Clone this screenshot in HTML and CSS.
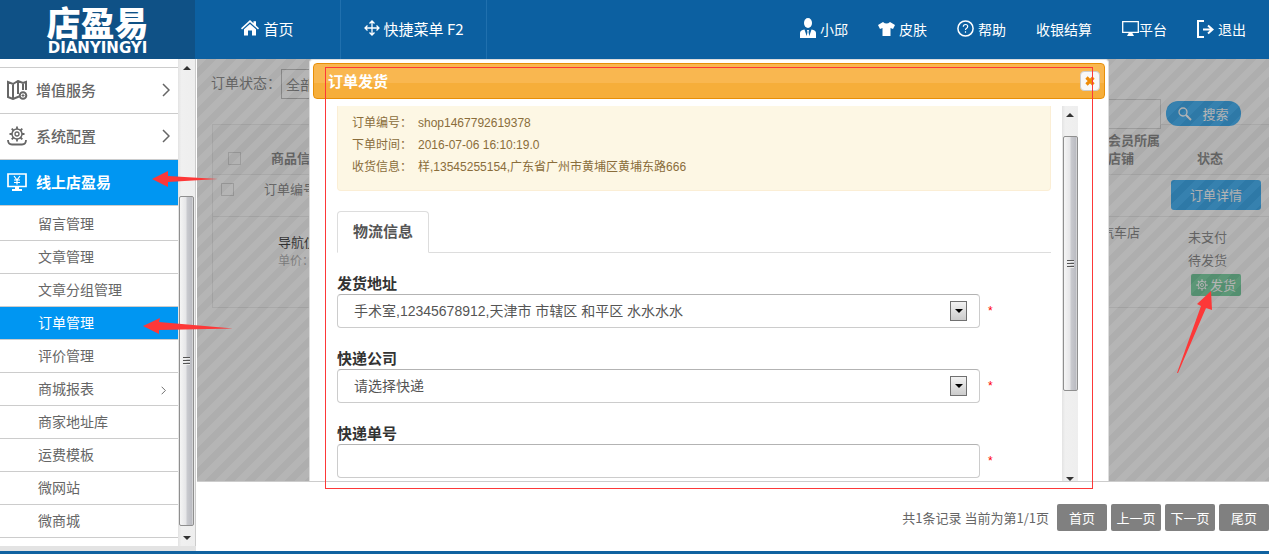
FILE: index.html
```html
<!DOCTYPE html>
<html lang="zh-CN">
<head>
<meta charset="utf-8">
<title>店盈易 - 订单管理</title>
<link rel="stylesheet" href="styles.css">
</head>
<body>
<svg class="defs" width="0" height="0" aria-hidden="true">
  <symbol id="gear" viewBox="0 0 24 24">
    <circle cx="12" cy="12" r="7.5" fill="none" stroke="currentColor" stroke-width="2"/>
    <circle cx="12" cy="12" r="3" fill="none" stroke="currentColor" stroke-width="2"/>
    <path d="M12 0.500v4M12 19.500v4M0.500 12h4M19.500 12h4M3.900 3.900l2.800 2.800M17.300 17.300l2.800 2.800M3.900 20.100l2.800-2.800M17.300 6.700l2.800-2.800" stroke="currentColor" stroke-width="2.500" fill="none"/>
  </symbol>
  <symbol id="chevron" viewBox="0 0 8 14">
    <path d="M1 1l6 6-6 6" fill="none" stroke="currentColor" stroke-width="1.500"/>
  </symbol>
</svg>

<header class="topbar">
  <a class="logo" href="#">
    <span class="logo-cn">店盈易</span>
    <span class="logo-en">DIANYINGYI</span>
  </a>
  <nav class="nav-main">
    <a href="#">
      <svg width="18" height="16" viewBox="0 0 18 16" fill="#fff"><path d="M9 0l3.500 3.200V1.200H15v4.300L18 8.300l-1 1.100L9 2.300 1 9.400 0 8.300z"/><path d="M9 4l6 5.300V15.500h-4v-5H7v5H3V9.300z"/></svg>
      首页
    </a>
    <a href="#">
      <svg width="16" height="16" viewBox="0 0 16 16" fill="none" stroke="#fff" stroke-width="1.300"><path d="M8 1v14M1 8h14M5.500 3.500L8 1l2.500 2.500M5.500 12.500L8 15l2.500-2.500M3.500 5.500L1 8l2.500 2.500M12.500 5.500L15 8l-2.500 2.500"/></svg>
      快捷菜单 F2
    </a>
  </nav>
  <nav class="nav-user">
    <a class="user" href="#">
      <svg width="16" height="20" viewBox="0 0 16 20" fill="#fff"><ellipse cx="8" cy="5" rx="4" ry="5"/><path d="M4.500 11.500L7 19H0v-4q0-3 4.500-3.500zM11.500 11.500L9 19h7v-4q0-3-4.500-3.500zM7 12h2l-.5 2 .8 4L8 20l-1.300-2 .8-4z"/><path d="M0 18h16v2H0z"/></svg>
      小邱
    </a>
    <a href="#">
      <svg width="17" height="15" viewBox="0 0 17 15" fill="#fff"><path d="M5 1q3.500 3 7 0l5 3-2 4-2.500-1v8h-8V7L2 8 0 4z"/></svg>
      皮肤
    </a>
    <a href="#">
      <svg width="17" height="17" viewBox="0 0 17 17" fill="none" stroke="#fff"><circle cx="8.500" cy="8.500" r="7.600" stroke-width="1.500"/><path d="M6.300 6.800q0-2.300 2.200-2.300t2.200 2q0 1-1.100 1.700t-1.100 1.800M8.500 11.300v1.500" stroke-width="1.200"/></svg>
      帮助
    </a>
    <a href="#">收银结算</a>
    <a class="platform" href="#">
      <svg width="17" height="15" viewBox="0 0 17 15"><path d="M.7.700h15.600v10.600H.7z" fill="none" stroke="#fff" stroke-width="1.300"/><path d="M7 11.500h3l2 3.500H5z" fill="#fff"/></svg>平台
    </a>
    <a href="#">
      <svg width="17" height="18" viewBox="0 0 17 18" fill="none" stroke="#fff" stroke-width="2"><path d="M7 1H1v16h6M6 9.500h9M11 5.500l4.500 4-4.500 4"/></svg>
      退出
    </a>
  </nav>
</header>

<div class="workspace">
  <aside class="sidebar">
    <div class="sidebar-body">
      <nav class="menu">
        <a class="group" href="#">
          <svg width="22" height="20" viewBox="0 0 22 20" fill="none" stroke="#666" stroke-width="2"><path d="M12 16.500l-6 2.500-5-2V2l5 2 5-3 5 2 3-1v8M6 4v15M11 1v13M16 3v7"/><circle cx="16" cy="15.500" r="3.300"/><path d="M16 14v3M14.500 15.500h3" stroke-width="1"/></svg>
          <span>增值服务</span>
          <svg class="chev" width="8" height="14"><use href="#chevron"/></svg>
        </a>
        <a class="group" href="#">
          <svg width="22" height="20" viewBox="0 0 22 20" fill="none" stroke="#666"><circle cx="10" cy="8" r="5" stroke-width="1.500"/><circle cx="10" cy="8" r="2" stroke-width="1.300"/><path d="M10 .5V3M10 13v2.500M2.500 8H5M15 8h2.500M4.700 2.700l1.800 1.800M13.500 11.500l1.800 1.800M4.700 13.300l1.800-1.800M13.500 4.500l1.800-1.800" stroke-width="1.800"/><path d="M1 14q0 4.500 4 4.500h10q4 0 4-4.500" stroke-width="1.800"/></svg>
          <span>系统配置</span>
          <svg class="chev" width="8" height="14"><use href="#chevron"/></svg>
        </a>
        <a class="group active" href="#">
          <svg width="22" height="20" viewBox="0 0 22 20" fill="none" stroke="#fff"><path d="M1 2h18v12.500H1z" stroke-width="1.700"/><path d="M7 4l3 4 3-4M7 8h6M7 10.500h6M10 8v4.500" stroke-width="1.200"/><path d="M8 14.500h4V17h3v2H5v-2h3z" fill="#fff" stroke="none"/></svg>
          <span>线上店盈易</span>
        </a>
        <ul class="submenu">
          <li><a href="#">留言管理</a></li>
          <li><a href="#">文章管理</a></li>
          <li><a href="#">文章分组管理</a></li>
          <li><a class="active" href="#">订单管理</a></li>
          <li><a href="#">评价管理</a></li>
          <li><a href="#">商城报表<svg class="chev" width="5" height="9"><use href="#chevron"/></svg></a></li>
          <li><a href="#">商家地址库</a></li>
          <li><a href="#">运费模板</a></li>
          <li><a href="#">微网站</a></li>
          <li><a href="#">微商城</a></li>
        </ul>
      </nav>
      <div class="scrollbar side-scroll" aria-hidden="true">
        <i class="arrow up"></i>
        <div class="thumb"><i class="grip"></i></div>
        <i class="arrow down"></i>
      </div>
    </div>
  </aside>

  <main class="main">
    <section class="stage">
      <div class="page">
        <form class="filters">
          <label for="status">订单状态：</label>
          <select id="status"><option>全部</option></select>
          <input class="keyword" type="text" aria-label="关键字">
          <button class="search" type="button">
            <svg width="14" height="14" viewBox="0 0 14 14" fill="none" stroke="#fff"><circle cx="5" cy="5" r="4" stroke-width="1.300"/><path d="M8 8l5 5" stroke-width="2"/></svg>
            搜索
          </button>
        </form>
        <div class="orders-wrap">
          <table class="orders">
            <colgroup><col><col class="c-store"><col class="c-status"></colgroup>
            <thead>
              <tr>
                <th><span class="line head"><input type="checkbox" aria-label="全选">商品信息</span></th>
                <th>会员所属店铺</th>
                <th class="state">状态</th>
              </tr>
            </thead>
            <tbody>
              <tr class="r-order">
                <td colspan="2"><span class="line"><input type="checkbox" aria-label="选择订单">订单编号</span></td>
                <td><button class="detail" type="button">订单详情</button></td>
              </tr>
              <tr class="r-item">
                <td><div class="goods"><strong>导航仪</strong><span>单价：</span></div></td>
                <td class="store">汽车店</td>
                <td class="ops">
                  <p>未支付</p>
                  <p>待发货</p>
                  <button class="ship" type="button"><svg width="12" height="12"><use href="#gear"/></svg>发货</button>
                </td>
              </tr>
            </tbody>
          </table>
        </div>
      </div>
      <div class="overlay"></div>

      <div class="dialog" role="dialog" aria-labelledby="dlg-title">
        <div class="dialog-title">
          <h2 id="dlg-title">订单发货</h2>
          <button class="close" type="button" aria-label="关闭">
            <svg width="10" height="10" viewBox="0 0 10 10"><path d="M1.500 1.500l7 7M8.500 1.500l-7 7" stroke="#ef8c08" stroke-width="3.200"/></svg>
          </button>
        </div>
        <div class="dialog-body">
          <div class="dialog-content">
            <dl class="notice">
              <div><dt>订单编号：</dt><dd>shop1467792619378</dd></div>
              <div><dt>下单时间：</dt><dd>2016-07-06 16:10:19.0</dd></div>
              <div><dt>收货信息：</dt><dd>样,13545255154,广东省广州市黄埔区黄埔东路666</dd></div>
            </dl>
            <div class="tabs"><a class="tab" href="#">物流信息</a></div>
            <form class="ship-form">
              <div class="field">
                <label for="addr">发货地址</label>
                <div class="control">
                  <span class="select-box">
                    <select id="addr"><option>手术室,12345678912,天津市 市辖区 和平区 水水水水</option></select>
                    <i class="drop"></i>
                  </span>
                  <em>*</em>
                </div>
              </div>
              <div class="field">
                <label for="company">快递公司</label>
                <div class="control">
                  <span class="select-box">
                    <select id="company"><option>请选择快递</option></select>
                    <i class="drop"></i>
                  </span>
                  <em>*</em>
                </div>
              </div>
              <div class="field">
                <label for="number">快递单号</label>
                <div class="control">
                  <input id="number" type="text">
                  <em>*</em>
                </div>
              </div>
            </form>
          </div>
          <div class="scrollbar dialog-scroll" aria-hidden="true">
            <i class="arrow up"></i>
            <div class="thumb"><i class="grip"></i></div>
            <i class="arrow down"></i>
          </div>
        </div>
      </div>
      <div class="frame"></div>
    </section>

    <footer class="pager">
      <span>共1条记录 当前为第1/1页</span>
      <button type="button">首页</button>
      <button type="button">上一页</button>
      <button type="button">下一页</button>
      <button type="button">尾页</button>
    </footer>
  </main>

  <svg class="mark mark-group" width="66" height="16" viewBox="0 0 66 16"><path d="M0 8L16 0v5l50 3-50 3v5z" fill="#fd3838"/></svg>
  <svg class="mark mark-item" width="90" height="16" viewBox="0 0 90 16"><path d="M0 8L17 0l-1 4 74 6.500L16 12v4z" fill="#fd3838"/></svg>
  <svg class="mark mark-ship" width="36" height="82" viewBox="0 0 36 82"><path d="M34 0L20 13l4 2L0 82h1L29 17l6 2z" fill="#fd3838"/></svg>
</div>
<div class="bottom-line"></div>
</body>
</html>
```

FILE: styles.css
```css
* { box-sizing: border-box; }

body {
  margin: 0;
  min-height: 100vh;
  display: flex;
  flex-direction: column;
  overflow-x: hidden;
  background: #fff;
  color: #666;
  font: 14px/20px "Noto Sans CJK SC", sans-serif;
}

a { color: inherit; text-decoration: none; }
svg { flex: none; }
button, input, select { font: inherit; color: inherit; margin: 0; }
button { border: 0; padding: 0; cursor: pointer; }
.defs { position: absolute; }

/* top bar */
.topbar {
  display: flex;
  height: 59px;
  background: #0c60a1;
  color: #fff;
}
.logo {
  width: 195px;
  background: #0f5186;
  display: flex;
  flex-direction: column;
  align-items: center;
  padding-top: 3px;
  font-weight: 900;
}
.logo-cn { font-size: 34px; line-height: 37px; }
.logo-en { font: bold 15px/16px "DejaVu Sans", sans-serif; }
.nav-main { display: flex; font-size: 15px; }
.nav-main a {
  width: 146px;
  display: flex;
  align-items: center;
  justify-content: center;
  gap: 4px;
  padding-bottom: 2px;
  border-right: 1px solid #2070ae;
}
.nav-main svg { margin-bottom: 2px; }
.nav-user {
  display: flex;
  margin-left: auto;
  padding: 0 23px 2px 0;
  gap: 30px;
}
.nav-user a { display: flex; align-items: center; gap: 4px; }
.nav-user .platform { gap: 0; }
.nav-user .user svg { margin-bottom: 2px; }

/* workspace */
.workspace { flex: 1; display: flex; position: relative; }

.sidebar {
  width: 197px;
  display: flex;
  flex-direction: column;
  padding-bottom: 5px;
  background: #e3e3e3;
  border-right: 1px solid #fff;
}
.sidebar-body {
  flex: 1;
  display: flex;
  background: #fff;
  border-right: 1px solid #ccc;
}
.menu { flex: 1; padding-top: 8px; }
.group {
  display: flex;
  align-items: center;
  gap: 7px;
  height: 46px;
  padding: 0 8px 2px 7px;
  border-top: 1px solid #ccc;
  font-size: 15px;
  font-weight: 500;
}
.group .chev, .submenu .chev { margin-left: auto; }
.group.active { background: #0096f2; color: #fff; font-weight: 700; }
.submenu {
  list-style: none;
  margin: 0;
  padding: 2px 0 0;
  border-top: 1px solid #ccc;
}
.submenu a {
  display: flex;
  align-items: center;
  height: 33px;
  padding: 0 12px 2px 38px;
  border-bottom: 1px solid #ccc;
}
.submenu a.active { background: #0096f2; color: #fff; }
.submenu .chev { margin-top: 4px; }

/* drawn scrollbars */
.scrollbar {
  width: 16px;
  display: flex;
  flex-direction: column;
  align-items: center;
  background: linear-gradient(90deg, #e3e3e3, #f0f0f0 20%, #eee);
}
.arrow { border: 4px solid transparent; }
.arrow.up { border-top: 0; border-bottom: 4px solid #333; margin: 7px 0 0; }
.arrow.down { border-bottom: 0; border-top: 4px solid #333; margin: auto 0 6px; }
.thumb {
  width: 15px;
  display: flex;
  align-items: center;
  justify-content: center;
  border: 1px solid #8f8f8f;
  border-radius: 2px;
  background: linear-gradient(90deg, #f5f5f5, #e6e6e8 45%, #c9cacf 55%, #bbbcc2 90%, #e0e0e0);
}
.grip {
  width: 7px;
  height: 8px;
  background: repeating-linear-gradient(#555 0 1px, #eee 1px 2px, transparent 2px 3px);
}
.side-scroll { width: 17px; }
.side-scroll .thumb { height: 330px; margin-top: 126px; }
.dialog-scroll .thumb { height: 255px; margin-top: 19px; }
.dialog-scroll .arrow.down { margin-bottom: 0; }

/* main area */
.main { flex: 1; min-width: 0; display: flex; flex-direction: column; }
.stage {
  flex: 1;
  position: relative;
  border-bottom: 1px solid #ccc;
}
.page { padding-top: 9px; }
.filters {
  display: grid;
  grid-template-columns: auto 100px 1fr auto;
  padding: 0 28px 0 14px;
  height: 56px;
}
.filters label { line-height: 28px; width: 70px; white-space: nowrap; }
.filters select {
  height: 30px;
  margin-top: 1px;
  padding-left: 4px;
  border: 1px solid #aaa;
  background: #fff;
  appearance: none;
}
.filters .keyword {
  justify-self: end;
  width: 160px;
  height: 30px;
  margin-top: 31px;
  border: 1px solid #ccc;
}
.filters .search {
  display: flex;
  align-items: center;
  justify-content: center;
  gap: 10px;
  width: 75px;
  height: 25px;
  margin: 33px 0 0 5px;
  border-radius: 12px;
  background: #0096f2;
  color: #fff;
  font-size: 13px;
}
.orders-wrap { padding-left: 15px; }
.orders {
  width: 100%;
  table-layout: fixed;
  border-collapse: collapse;
  border: 1px solid #e6e6e6;
  border-right: 0;
  font-size: 13px;
  line-height: 18px;
}
.orders tr { border-bottom: 1px solid #e6e6e6; }
.orders th, .orders td { padding: 0; text-align: left; vertical-align: top; }
.orders thead tr { height: 50px; background: #fafafa; }
.orders thead th { padding-top: 6px; }
.orders thead .state { padding: 24px 0 0 36px; }
.c-store { width: 53px; }
.c-status { width: 108px; }
.line { display: flex; align-items: center; gap: 30px; padding: 5px 0 0 8px; }
.line.head { padding: 18px 0 0 15px; }
.line input {
  appearance: none;
  width: 13px;
  height: 13px;
  border: 1px solid #ccc;
}
.r-order { height: 42px; }
.r-order .detail {
  width: 90px;
  height: 30px;
  margin: 5px 0 0 10px;
  border-radius: 3px;
  background: #0096f2;
  color: #fff;
}
.r-item { height: 91px; }
.goods { display: flex; flex-direction: column; padding: 16px 0 0 65px; }
.goods strong { color: #000; font-weight: 400; }
.goods span { color: #999; font-size: 12px; }
.orders .store { padding: 6px 21px 0 0; direction: rtl; white-space: nowrap; }
.orders .ops { padding: 11px 0 0 27px; }
.ops p { margin: 0 0 5px; }
.ops .ship {
  display: flex;
  align-items: center;
  justify-content: center;
  gap: 2px;
  width: 50px;
  height: 22px;
  margin-left: 3px;
  border-radius: 2px;
  background: #4cc283;
  color: #fff;
}
.overlay {
  position: absolute;
  inset: 0;
  opacity: .5;
  background: linear-gradient(135deg, #6b6b6b 25%, #5c5c5c 25% 50%, #6b6b6b 50% 75%, #5c5c5c 75%) 0 0 / 20px 20px;
}

/* dialog */
.dialog {
  position: absolute;
  inset: 0 160px 0 112px;
  display: flex;
  flex-direction: column;
  padding: 3px 3px 0;
  overflow: hidden;
  background: #fff;
  border: 1px solid #ddd;
  border-bottom: 0;
  border-radius: 4px 4px 0 0;
}
.dialog-title {
  display: flex;
  align-items: center;
  justify-content: space-between;
  height: 36px;
  padding: 0 4px 0 14px;
  border: 1px solid #e78f08;
  border-radius: 4px;
  background: linear-gradient(#f9b750 0 55%, #f6ae3a 55%);
  color: #fff;
}
.dialog-title h2 { margin: 0; font-size: 15px; line-height: 20px; }
.close {
  display: flex;
  align-items: center;
  justify-content: center;
  width: 20px;
  height: 20px;
  border: 1px solid #ccc;
  border-radius: 4px;
  background: #f8f8f8;
}
.dialog-body {
  flex: 1;
  min-height: 0;
  display: flex;
  justify-content: space-between;
  padding: 7px 27px 0 24px;
}
.dialog-content {
  flex: 1;
  height: 374px;
  margin-right: 11px;
  font-family: "Liberation Sans", "Noto Sans CJK SC", sans-serif;
}
.notice {
  margin: 0;
  height: 85px;
  padding: 6px 14px 0;
  border: 1px solid #fbeed5;
  border-top: 0;
  border-radius: 0 0 4px 4px;
  background: #fdf7e4;
  color: #8a6d3b;
  font-size: 12px;
  line-height: 22px;
}
.notice div { display: flex; }
.notice dt { width: 66px; }
.notice dd { margin: 0; }
.tabs { display: flex; margin-top: 20px; border-bottom: 1px solid #ddd; }
.tab {
  height: 42px;
  margin-bottom: -1px;
  padding: 0 15px;
  border: 1px solid #ddd;
  border-bottom-color: #fff;
  border-radius: 4px 4px 0 0;
  background: #fff;
  color: #555;
  font-size: 15px;
  font-weight: 700;
  line-height: 40px;
}
.ship-form { padding-top: 21px; }
.field { margin-bottom: 21px; }
.field label {
  display: block;
  color: #333;
  font-size: 15px;
  font-weight: 700;
  line-height: 20px;
}
.control { display: flex; align-items: center; gap: 8px; }
.select-box { position: relative; }
.select-box, .control > input { flex: 1; max-width: 643px; height: 34px; }
.select-box select, .control > input {
  width: 100%;
  height: 34px;
  padding: 0 16px;
  border: 1px solid #ccc;
  border-top-color: #b3b3b3;
  border-radius: 4px;
  background: #fff;
  color: #555;
  appearance: none;
}
.drop {
  position: absolute;
  top: 7px;
  right: 13px;
  width: 17px;
  height: 20px;
  display: flex;
  align-items: center;
  justify-content: center;
  border: 1px solid #707070;
  background: linear-gradient(#f2f2f2, #ccc);
  pointer-events: none;
}
.drop::after { content: ""; border: 4px solid transparent; border-top-color: #000; border-bottom: 0; }
.control em { color: #f00; font-size: 12px; font-style: normal; }

/* pagination */
.pager {
  display: flex;
  justify-content: flex-end;
  gap: 4px;
  height: 69px;
  padding-top: 22px;
  font-size: 13px;
  line-height: 27px;
}
.pager span { margin-right: 4px; }
.pager button { width: 50px; height: 27px; border-radius: 2px; background: #808080; color: #fff; }
.bottom-line { height: 3px; background: #1062a0; }

/* red annotations */
.frame {
  position: absolute;
  inset: 8px 176px -8px 128px;
  border: 1px solid #fd3838;
}
.mark { position: absolute; }
.mark-group { left: 152px; top: 112px; }
.mark-item { left: 143px; top: 259px; }
.mark-ship { right: 56px; top: 232px; }
```
